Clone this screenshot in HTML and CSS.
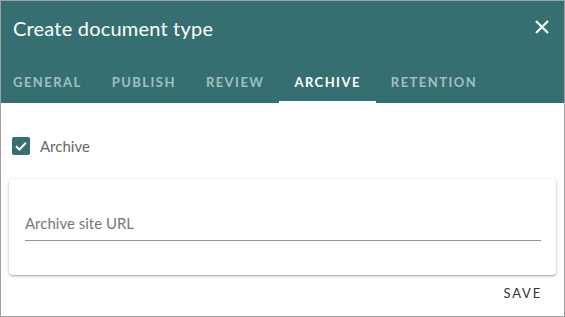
FILE: index.html
```html
<!DOCTYPE html>
<html lang="en">
  <head>
    <meta charset="UTF-8" />
    <title>Create document type</title>
    <link rel="stylesheet" href="styles.css">
  </head>
  <body>
    <div class="dialog">
      <div class="header">
        <div class="title-row">
          <h1 class="title">Create document type</h1>
          <a class="close" href="javascript:;">
            <svg width="14" height="14" viewBox="0 0 14 14">
              <path d="M1 1 L13 13 M13 1 L1 13" stroke="#fff" stroke-width="2.2" fill="none" />
            </svg>
          </a>
        </div>
        <ul class="tabs">
          <li><a href="javascript:;">General</a></li>
          <li><a href="javascript:;">Publish</a></li>
          <li><a href="javascript:;">Review</a></li>
          <li class="active"><a href="javascript:;">Archive</a></li>
          <li><a href="javascript:;">Retention</a></li>
        </ul>
      </div>

      <div class="content">
        <label class="check">
          <span class="box">
            <svg width="18" height="18" viewBox="0 0 18 18">
              <path d="M4 9.2 L7.4 12.5 L14 5.6" stroke="#fff" stroke-width="2" fill="none" />
            </svg>
          </span>
          Archive
        </label>

        <div class="card">
          <div class="field">
            <span class="field-label">Archive site URL</span>
          </div>
        </div>
      </div>

      <div class="actions">
        <a class="btn" href="javascript:;">Save</a>
      </div>
    </div>
  </body>
</html>
```

FILE: styles.css
```css
* {
  margin: 0;
  padding: 0;
  box-sizing: border-box;
}

body {
  font-family: "Lato", "Noto Sans", sans-serif;
}

ul {
  list-style: none;
}

a {
  text-decoration: none;
}

.dialog {
  width: 565px;
  height: 317px;
  border: 1px solid #a0a0a0;
  background-color: #fff;
  display: flex;
  flex-direction: column;
}

.header {
  background-color: #366f71;
}

.title-row {
  height: 54px;
  padding: 0 15px 0 12px;
  display: flex;
  align-items: center;
  justify-content: space-between;
}

.title {
  font-size: 20px;
  font-weight: 400;
  color: #fff;
  letter-spacing: 0.2px;
}

.close {
  display: flex;
  width: 14px;
  height: 14px;
  margin-top: -2px;
}

.tabs {
  display: flex;
  height: 48px;
}

.tabs li {
  display: flex;
  align-items: center;
  padding: 8px 15px 0;
  border-bottom: 2px solid transparent;
}

.tabs li:first-child {
  padding-left: 12px;
}

.tabs a {
  font-size: 13px;
  font-weight: 700;
  text-transform: uppercase;
  letter-spacing: 1.45px;
  color: #9fc0c1;
}

.tabs .active {
  border-bottom-color: #fff;
}

.tabs .active a {
  color: #fff;
}

.content {
  padding: 34px 8px 0 8px;
}

.check {
  display: flex;
  align-items: center;
  gap: 10px;
  padding-left: 3px;
  font-size: 15px;
  color: #666;
}

.box {
  display: flex;
  width: 18px;
  height: 18px;
  border-radius: 2px;
  background-color: #366f71;
}

.card {
  margin-top: 24px;
  height: 96px;
  border-radius: 4px;
  box-shadow: 0 1px 3px rgba(0, 0, 0, 0.3), 0 1px 1px rgba(0, 0, 0, 0.1);
  padding: 34px 15px 0 16px;
}

.field {
  height: 28px;
  border-bottom: 1px solid #949494;
}

.field-label {
  font-size: 15px;
  color: #777;
}

.actions {
  display: flex;
  justify-content: flex-end;
  padding: 10px 22px 0;
}

.btn {
  font-size: 13px;
  font-weight: 400;
  text-transform: uppercase;
  letter-spacing: 1.8px;
  color: #333;
}
```
